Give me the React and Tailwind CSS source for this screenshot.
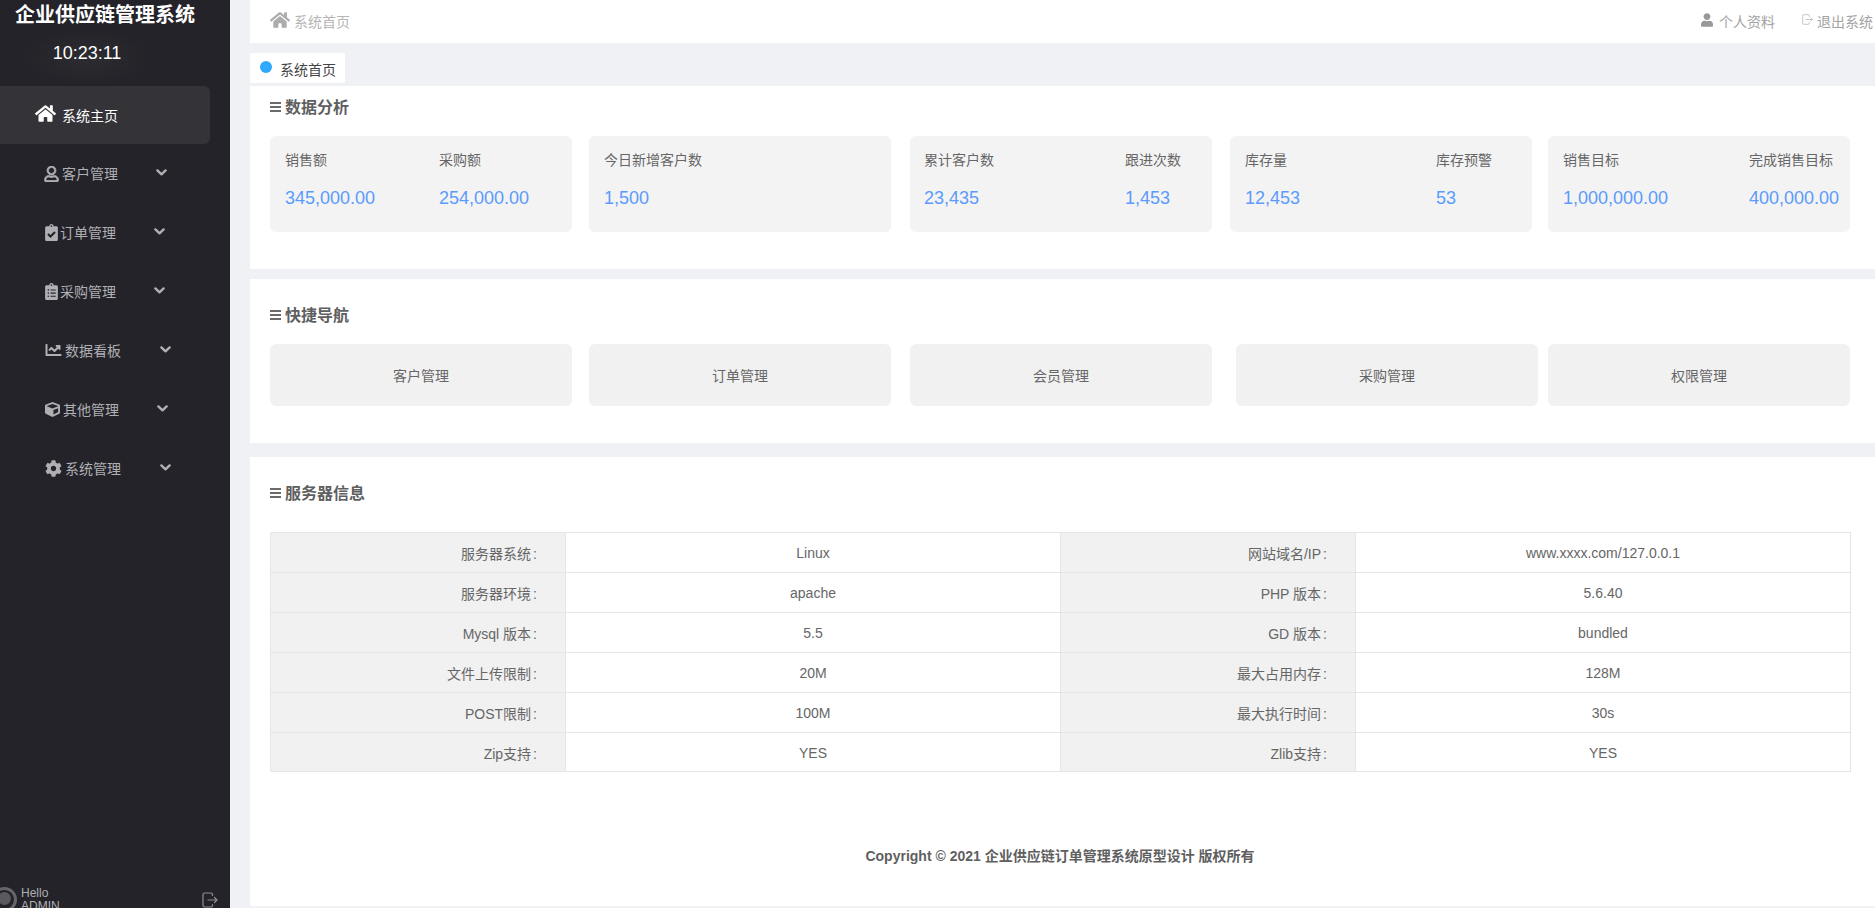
import React from "react";
import { FaHome, FaRegUser, FaClipboardCheck, FaClipboardList, FaChartLine, FaCube, FaCog, FaUser } from "react-icons/fa";

function Bars() {
  return (
    <svg width="11" height="10" viewBox="0 0 11 10" className="shrink-0 mr-[4px] -mt-[3px]">
      <rect x="0" y="0" width="11" height="2" fill="#6a6a6a" />
      <rect x="0" y="4" width="11" height="2" fill="#6a6a6a" />
      <rect x="0" y="8" width="11" height="2" fill="#6a6a6a" />
    </svg>
  );
}

function Exit({ size, color, sw }) {
  return (
    <svg width={size} height={size} viewBox="0 0 16 16" fill="none" stroke={color} strokeWidth={sw} strokeLinecap="round" strokeLinejoin="round" className="shrink-0">
      <path d="M10.5 3.5V2.5a1.5 1.5 0 0 0-1.5-1.5H2.5A1.5 1.5 0 0 0 1 2.5v11A1.5 1.5 0 0 0 2.5 15H9a1.5 1.5 0 0 0 1.5-1.5v-1" />
      <path d="M6 8h9M12.5 5.5 15 8l-2.5 2.5" />
    </svg>
  );
}

function Chevron({ cls }) {
  return (
    <svg width="11" height="7" viewBox="0 0 11 7" fill="none" stroke="#b0b0b4" strokeWidth="2.4" strokeLinecap="round" strokeLinejoin="round" className={`shrink-0 -mt-[5px] ${cls}`}>
      <path d="M1.4 1.4 5.5 5.3 9.6 1.4" />
    </svg>
  );
}

function NavItem({ icon, label, cls, textCls, chevCls }) {
  return (
    <div className={`h-[59px] flex items-center pt-[2px] text-[14px] text-[#b0b0b4] ${cls}`}>
      {icon}
      <span className={textCls}>{label}</span>
      <Chevron cls={chevCls} />
    </div>
  );
}

function Stat({ label, value, cls }) {
  return (
    <div className={cls}>
      <div className="text-[14px] leading-[20px] text-[#666666] whitespace-nowrap">{label}</div>
      <div className="text-[18px] leading-[24px] mt-[16px] text-[#5b9bfb] whitespace-nowrap">{value}</div>
    </div>
  );
}

function Card({ cls, children }) {
  return <div className={`w-[302px] h-[96px] bg-[#f3f3f4] rounded-[6px] flex pt-[14px] ${cls}`}>{children}</div>;
}

function Quick({ label, cls }) {
  return (
    <div className={`w-[302px] h-[62px] bg-[#f1f1f2] rounded-[6px] flex items-center justify-center pt-[2px] text-[14px] text-[#666666] ${cls}`}>{label}</div>
  );
}

function Title({ children, cls }) {
  return (
    <div className={`flex items-center text-[16px] leading-[22px] font-bold text-[#5f5f5f] ${cls}`}>
      <Bars />
      <span>{children}</span>
    </div>
  );
}

function Label({ text }) {
  return (
    <td className="border border-[#e6e6e6] bg-[#f1f1f1] text-right pr-[28px] pt-[4px]">
      {text}<span className="ml-[2px]">:</span>
    </td>
  );
}

const rows = [
  ["服务器系统", "Linux", "网站域名/IP", "www.xxxx.com/127.0.0.1"],
  ["服务器环境", "apache", "PHP 版本", "5.6.40"],
  ["Mysql 版本", "5.5", "GD 版本", "bundled"],
  ["文件上传限制", "20M", "最大占用内存", "128M"],
  ["POST限制", "100M", "最大执行时间", "30s"],
  ["Zip支持", "YES", "Zlib支持", "YES"],
];

export default function App() {
  return (
    <div className="[font-family:Liberation_Sans,Noto_Sans_CJK_SC,sans-serif] w-[1875px] h-[908px] overflow-hidden flex bg-[#f0f1f5]">
      <aside className="w-[230px] h-[908px] shrink-0 bg-[#232329] flex flex-col relative overflow-hidden">
        <div className="relative z-10 text-[20px] leading-[28px] font-bold text-white pl-[15px] pt-[1px] h-[28px] whitespace-nowrap">企业供应链管理系统</div>
        <div className="relative h-[58px]">
          <div className="absolute left-[25px] top-0 w-[125px] h-[58px] bg-[radial-gradient(closest-side,#2c2c31,#232329)]"></div>
          <div className="relative text-[18px] leading-[24px] text-white w-[174px] text-center mt-[13px]">10:23:11</div>
        </div>
        <div className="w-[210px] h-[58px] bg-[#333338] rounded-r-[6px] flex items-center pl-[35px] text-[14px] text-white">
          <FaHome className="w-[21px] h-[19px] -mt-[3px]" />
          <span className="ml-[6px] pt-[2px]">系统主页</span>
        </div>
        <NavItem cls="pl-[44px]" icon={<FaRegUser className="w-[15px] h-[16px] -mt-[2px] stroke-[24px]" />} label="客户管理" textCls="ml-[3px]" chevCls="ml-[38px]" />
        <NavItem cls="pl-[45px]" icon={<FaClipboardCheck className="w-[13px] h-[17px] -mt-[2px]" />} label="订单管理" textCls="ml-[2px]" chevCls="ml-[38px]" />
        <NavItem cls="pl-[45px]" icon={<FaClipboardList className="w-[13px] h-[17px] -mt-[2px]" />} label="采购管理" textCls="ml-[2px]" chevCls="ml-[38px]" />
        <NavItem cls="pl-[45px]" icon={<FaChartLine className="w-[17px] h-[16px] -mt-[3px]" />} label="数据看板" textCls="ml-[3px]" chevCls="ml-[39px]" />
        <NavItem cls="pl-[45px]" icon={<FaCube className="w-[15px] h-[17px] -mt-[2px]" />} label="其他管理" textCls="ml-[3px]" chevCls="ml-[38px]" />
        <NavItem cls="pl-[45px]" icon={<FaCog className="w-[17px] h-[17px] -mt-[2px]" />} label="系统管理" textCls="ml-[3px]" chevCls="ml-[39px]" />
        <div className="absolute left-[-8px] top-[887px] w-[25px] h-[25px] rounded-full border-[3px] border-[#666669] overflow-hidden">
          <div className="w-[13px] h-[13px] bg-[#5a5a5e] rounded-full ml-[3px] mt-[2px]"></div>
        </div>
        <div className="absolute left-[21px] top-[887px] text-[12px] leading-[13px] text-[#b0b0b4]">
          <div>Hello</div>
          <div>ADMIN</div>
        </div>
        <div className="absolute left-[202px] top-[892px]">
          <Exit size={16} color="#8e8e92" sw={1.2} />
        </div>
      </aside>

      <main className="flex-1 pl-[20px] flex flex-col">
        <header className="h-[43px] bg-white flex items-center text-[#b5b5b5]">
          <FaHome className="ml-[20px] w-[20px] h-[18px] text-[#acacac] -mt-[3px]" />
          <span className="ml-[4px] pt-[2px] text-[14px]">系统首页</span>
          <div className="ml-auto flex items-center pt-[2px] text-[14px] text-[#a3a3a3]">
            <FaUser className="w-[12px] h-[14px] text-[#999999] -mt-[5px]" />
            <span className="ml-[6px]">个人资料</span>
            <span className="ml-[27px] -mt-[6px]"><Exit size={11} color="#b5b5b5" sw={1.1} /></span>
            <span className="ml-[4px] mr-[2px] whitespace-nowrap">退出系统</span>
          </div>
        </header>

        <div className="mt-[10px] w-[95px] h-[30px] bg-white rounded-[2px] flex items-center">
          <span className="ml-[10px] w-[12px] h-[12px] rounded-full bg-[#2fa9fb] -mt-[3px]"></span>
          <span className="ml-[8px] pt-[5px] text-[14px] text-[#444444]">系统首页</span>
        </div>

        <section className="mt-[3px] h-[183px] bg-white pl-[20px] pt-[11px]">
          <Title cls="h-[22px]">数据分析</Title>
          <div className="flex mt-[17px]">
            <Card cls="pl-[15px]">
              <Stat cls="w-[154px]" label="销售额" value="345,000.00" />
              <Stat cls="" label="采购额" value="254,000.00" />
            </Card>
            <Card cls="ml-[17px] pl-[15px]">
              <Stat cls="" label="今日新增客户数" value="1,500" />
            </Card>
            <Card cls="ml-[19px] pl-[14px]">
              <Stat cls="w-[201px]" label="累计客户数" value="23,435" />
              <Stat cls="" label="跟进次数" value="1,453" />
            </Card>
            <Card cls="ml-[18px] pl-[15px]">
              <Stat cls="w-[191px]" label="库存量" value="12,453" />
              <Stat cls="" label="库存预警" value="53" />
            </Card>
            <Card cls="ml-[16px] pl-[15px]">
              <Stat cls="w-[186px]" label="销售目标" value="1,000,000.00" />
              <Stat cls="" label="完成销售目标" value="400,000.00" />
            </Card>
          </div>
        </section>

        <section className="mt-[10px] h-[164px] bg-white pl-[20px] pt-[26px]">
          <Title cls="">快捷导航</Title>
          <div className="flex mt-[17px]">
            <Quick label="客户管理" cls="" />
            <Quick label="订单管理" cls="ml-[17px]" />
            <Quick label="会员管理" cls="ml-[19px]" />
            <Quick label="采购管理" cls="ml-[24px]" />
            <Quick label="权限管理" cls="ml-[10px]" />
          </div>
        </section>

        <section className="mt-[14px] h-[449px] bg-white pl-[20px] pt-[26px]">
          <Title cls="">服务器信息</Title>
          <table className="mt-[27px] w-[1580px] table-fixed border-collapse text-[14px] text-[#666666]">
            <colgroup>
              <col className="w-[295px]" />
              <col className="w-[495px]" />
              <col className="w-[295px]" />
              <col className="w-[495px]" />
            </colgroup>
            <tbody>
              {rows.map((r, i) => (
                <tr key={r[0]} className={i === 5 ? "h-[39px]" : "h-[40px]"}>
                  <Label text={r[0]} />
                  <td className="border border-[#e6e6e6] text-center pt-[2px]">{r[1]}</td>
                  <Label text={r[2]} />
                  <td className="border border-[#e6e6e6] text-center pt-[2px]">{r[3]}</td>
                </tr>
              ))}
            </tbody>
          </table>
          <div className="mt-[74px] text-center text-[14px] leading-[20px] font-bold text-[#5f5f5f] pr-[25px]">
            Copyright © 2021 企业供应链订单管理系统原型设计 版权所有
          </div>
        </section>
      </main>
    </div>
  );
}
